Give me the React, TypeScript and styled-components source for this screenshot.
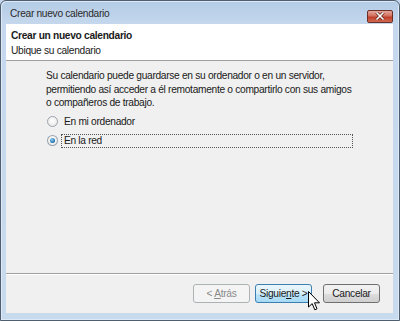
import styled, { createGlobalStyle } from "styled-components";

const GlobalStyle = createGlobalStyle`
  html, body {
    margin: 0;
    padding: 0;
    background: #c6d9ee;
  }
  body {
    font-family: "Liberation Sans", Arial, sans-serif;
    font-size: 10.2px;
    letter-spacing: -0.3px;
    color: #1a1a1a;
  }
`;

const Window = styled.div`
  position: relative;
  box-sizing: border-box;
  width: 400px;
  height: 321px;
  display: flex;
  flex-direction: column;
  border: 1px solid #4f5f70;
  border-radius: 6px 6px 0 0;
  background: linear-gradient(180deg, #b4cce6 0px, #c5d8ed 24px, #c8daee 100%);
  box-shadow: inset 1px 1px 0 #dde9f6, inset -1px -1px 0 #dde9f6;
  padding: 0 6px 7px 5px;
`;

const TitleBar = styled.div`
  height: 23px;
  display: flex;
  align-items: center;
  padding-left: 4px;
`;

const TitleText = styled.span`
  flex: 1;
  color: #2a2a2a;
  margin-top: 2px;
`;

const CloseButton = styled.div`
  box-sizing: border-box;
  width: 26px;
  height: 13px;
  margin-top: 7px;
  border: 1px solid #6b2f2a;
  border-radius: 2px;
  background: linear-gradient(180deg, #e6a79a 0%, #d2705f 45%, #bf3f2c 55%, #d06a50 100%);
  display: flex;
  align-items: center;
  justify-content: center;
`;

const ClientArea = styled.div`
  flex: 1;
  display: flex;
  flex-direction: column;
  background: #f0f0f0;
`;

const Header = styled.div`
  height: 37px;
  box-sizing: border-box;
  background: #ffffff;
  border-bottom: 1px solid #a0a0a0;
  padding: 4px 5px 0;
  line-height: 15px;
`;

const HeaderTitle = styled.div`
  font-weight: bold;
`;

const Body = styled.div`
  flex: 1;
  padding: 8px 40px 0;
`;

const Paragraph = styled.p`
  margin: 0;
  line-height: 13.5px;
  white-space: nowrap;
`;

const RadioList = styled.div`
  display: flex;
  flex-direction: column;
  gap: 5px;
  margin-top: 5px;
`;

const RadioRow = styled.label`
  display: flex;
  align-items: center;
  gap: 2px;
  height: 14px;
`;

const RadioCircle = styled.span<{ $checked: boolean }>`
  box-sizing: border-box;
  width: 11px;
  height: 11px;
  margin-left: 1px;
  margin-right: 1px;
  border-radius: 50%;
  border: 1px solid #9aa3ad;
  background: radial-gradient(circle at 50% 40%, #ffffff 0%, #e4e4e4 100%);
  display: flex;
  align-items: center;
  justify-content: center;
  &::after {
    content: "";
    display: ${p => (p.$checked ? "block" : "none")};
    width: 5px;
    height: 5px;
    border-radius: 50%;
    background: radial-gradient(circle at 40% 35%, #8fd0f0 0%, #2a7bb8 60%, #1b4f7e 100%);
  }
`;

const RadioLabel = styled.span<{ $focused?: boolean }>`
  box-sizing: border-box;
  height: 14px;
  line-height: 12px;
  padding: 0 2px;
  border: 1px dotted ${p => (p.$focused ? "#555" : "transparent")};
  width: ${p => (p.$focused ? "295px" : "auto")};
`;

const Footer = styled.div`
  height: 40px;
  box-sizing: border-box;
  border-top: 1px solid #a0a0a0;
  box-shadow: inset 0 1px 0 #ffffff;
  display: flex;
  justify-content: flex-end;
  align-items: center;
  padding: 0 13px 0 0;
`;

const Button = styled.button<{ $variant?: "disabled" | "hot" }>`
  box-sizing: border-box;
  width: 57px;
  height: 19px;
  padding: 0;
  white-space: nowrap;
  font-family: inherit;
  font-size: 10.2px;
  letter-spacing: -0.3px;
  border-radius: 3px;
  border: 1px solid #707070;
  color: #1a1a1a;
  background: linear-gradient(180deg, #f2f2f2 0%, #ebebeb 50%, #dddddd 51%, #cfcfcf 100%);
  ${p =>
    p.$variant === "disabled" &&
    `
    border-color: #adb2b5;
    color: #8a8a8a;
    background: #f4f4f4;
  `}
  ${p =>
    p.$variant === "hot" &&
    `
    border-color: #3c7fb1;
    background: linear-gradient(180deg, #eaf6fd 0%, #d9f0fc 50%, #bee6fd 51%, #a7d9f5 100%);
  `}
`;

const ButtonGroup = styled.div`
  display: flex;
  gap: 5px;
  margin-right: 11px;
`;

const Cursor = styled.svg`
  position: absolute;
  left: 307px;
  top: 290px;
`;

export default function App() {
  return (
    <>
      <GlobalStyle />
      <Window>
        <TitleBar>
          <TitleText>Crear nuevo calendario</TitleText>
          <CloseButton>
            <svg width="10" height="8" viewBox="0 0 10 8">
              <path d="M1.5 0.5 L8.5 7.5 M8.5 0.5 L1.5 7.5" stroke="#5a1d15" strokeWidth="3" />
              <path d="M1.5 0.5 L8.5 7.5 M8.5 0.5 L1.5 7.5" stroke="#ffffff" strokeWidth="1.6" />
            </svg>
          </CloseButton>
        </TitleBar>
        <ClientArea>
          <Header>
            <HeaderTitle>Crear un nuevo calendario</HeaderTitle>
            <div>Ubique su calendario</div>
          </Header>
          <Body>
            <Paragraph>
              Su calendario puede guardarse en su ordenador o en un servidor,
              <br />
              permitiendo así acceder a él remotamente o compartirlo con sus amigos
              <br />
              o compañeros de trabajo.
            </Paragraph>
            <RadioList>
              <RadioRow>
                <RadioCircle $checked={false} />
                <RadioLabel>En mi ordenador</RadioLabel>
              </RadioRow>
              <RadioRow>
                <RadioCircle $checked={true} />
                <RadioLabel $focused>En la red</RadioLabel>
              </RadioRow>
            </RadioList>
          </Body>
          <Footer>
            <ButtonGroup>
              <Button $variant="disabled">&lt; <u>A</u>trás</Button>
              <Button $variant="hot">Siguie<u>n</u>te &gt;</Button>
            </ButtonGroup>
            <Button>Cancelar</Button>
          </Footer>
        </ClientArea>
        <Cursor width="13" height="20" viewBox="0 0 13 20">
          <path d="M0.5 0.5 L0.5 16 L4.2 12.6 L6.8 18.8 L9 17.8 L6.5 11.8 L11.5 11.8 Z" fill="#ffffff" stroke="#000000" strokeWidth="1" />
        </Cursor>
      </Window>
    </>
  );
}
